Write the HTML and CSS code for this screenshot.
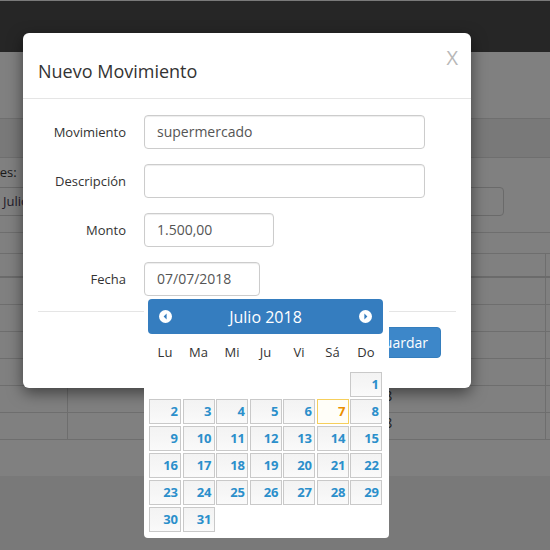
FILE: index.html
```html
<!DOCTYPE html>
<html lang="es">
<head>
<meta charset="utf-8">
<title>Nuevo Movimiento</title>
<link rel="stylesheet" href="styles.css">
</head>
<body>
<div class="page">
  <div class="navbar"></div>
  <main class="main">
    <div class="band"></div>
    <div class="filters">
      <div class="filter-col">
        <div class="bg-label">Mes:</div>
        <div class="bg-input">Julio</div>
      </div>
      <div class="filter-col right">
        <div class="bg-label">&nbsp;</div>
        <div class="bg-input"></div>
      </div>
    </div>
    <div class="bg-table">
      <div class="tr head"><div class="td"></div><div class="td"></div><div class="td"></div><div class="td"></div></div>
      <div class="tr"><div class="td"></div><div class="td"></div><div class="td"></div><div class="td"></div></div>
      <div class="tr"><div class="td"></div><div class="td"></div><div class="td"></div><div class="td"></div></div>
      <div class="tr"><div class="td"></div><div class="td"></div><div class="td"></div><div class="td"></div></div>
      <div class="tr"><div class="td"></div><div class="td"></div><div class="td"></div><div class="td"></div></div>
      <div class="tr"><div class="td"></div><div class="td"></div><div class="td">01/07/2018</div><div class="td"></div></div>
      <div class="tr"><div class="td"></div><div class="td"></div><div class="td">03/07/2018</div><div class="td"></div></div>
    </div>
  </main>
</div>

<div class="modal">
  <div class="modal-header">
    <h4 class="modal-title">Nuevo Movimiento</h4>
    <span class="close">X</span>
  </div>
  <div class="modal-body">
    <div class="form-group">
      <label class="form-label">Movimiento</label>
      <div class="form-control wide">supermercado</div>
    </div>
    <div class="form-group">
      <label class="form-label">Descripción</label>
      <div class="form-control wide"></div>
    </div>
    <div class="form-group">
      <label class="form-label">Monto</label>
      <div class="form-control monto">1.500,00</div>
    </div>
    <div class="form-group last">
      <label class="form-label">Fecha</label>
      <div class="form-control fecha">07/07/2018</div>
    </div>
  </div>
  <div class="modal-footer">
    <button class="btn-primary">Guardar</button>
  </div>
</div>

<div class="datepicker">
  <div class="dp-header">
    <svg class="dp-arrow" viewBox="0 0 13 13" width="13" height="13"><circle cx="6.5" cy="6.5" r="6.5" fill="#fff"/><path d="M7.6 3.6 L4.6 6.5 L7.6 9.4 Z" fill="#357dbf"/></svg>
    <span class="dp-title">Julio 2018</span>
    <svg class="dp-arrow" viewBox="0 0 13 13" width="13" height="13"><circle cx="6.5" cy="6.5" r="6.5" fill="#fff"/><path d="M5.4 3.6 L8.4 6.5 L5.4 9.4 Z" fill="#357dbf"/></svg>
  </div>
  <div class="dp-grid">
    <div class="dp-dow">Lu</div><div class="dp-dow">Ma</div><div class="dp-dow">Mi</div><div class="dp-dow">Ju</div><div class="dp-dow">Vi</div><div class="dp-dow">Sá</div><div class="dp-dow">Do</div>
    <div class="dp-empty"></div><div class="dp-empty"></div><div class="dp-empty"></div><div class="dp-empty"></div><div class="dp-empty"></div><div class="dp-empty"></div><div class="dp-day">1</div>
    <div class="dp-day">2</div><div class="dp-day">3</div><div class="dp-day">4</div><div class="dp-day">5</div><div class="dp-day">6</div><div class="dp-day today">7</div><div class="dp-day">8</div>
    <div class="dp-day">9</div><div class="dp-day">10</div><div class="dp-day">11</div><div class="dp-day">12</div><div class="dp-day">13</div><div class="dp-day">14</div><div class="dp-day">15</div>
    <div class="dp-day">16</div><div class="dp-day">17</div><div class="dp-day">18</div><div class="dp-day">19</div><div class="dp-day">20</div><div class="dp-day">21</div><div class="dp-day">22</div>
    <div class="dp-day">23</div><div class="dp-day">24</div><div class="dp-day">25</div><div class="dp-day">26</div><div class="dp-day">27</div><div class="dp-day">28</div><div class="dp-day">29</div>
    <div class="dp-day">30</div><div class="dp-day">31</div>
  </div>
</div>
</body>
</html>
```

FILE: styles.css
```css
* { box-sizing: border-box; }
html, body { margin: 0; padding: 0; }
body {
  width: 550px;
  height: 550px;
  overflow: hidden;
  background: #797979;
  font-family: "Open Sans", "DejaVu Sans", sans-serif;
  color: #333;
  position: relative;
}
.page { width: 550px; }
.navbar {
  height: 52px;
  background: #262626;
  border-top: 1px solid #7a7a7a;
}
.main {
  height: 424px;
  background: #808080;
  padding-top: 66px;
  overflow: hidden;
}
.band {
  height: 40px;
  background: #797979;
  border-top: 1px solid #6f6f6f;
  border-bottom: 1px solid #6f6f6f;
}
.filters {
  display: flex;
  justify-content: space-between;
  margin-left: -12px;
  padding: 4px 46px 16px 0;
  border-bottom: 1px solid #6e6e6e;
}
.filter-col { width: 200px; }
.filter-col.right { width: 210px; }
.bg-label {
  font-size: 13px;
  line-height: 20px;
  color: #1a1a1a;
  margin-bottom: 5px;
}
.bg-input {
  height: 29px;
  border: 1px solid #6a6a6a;
  border-radius: 4px;
  padding: 0 14px;
  font-size: 13px;
  line-height: 27px;
  color: #221a2a;
}
.bg-table {
  margin-top: 20px;
  border-top: 1px solid #6e6e6e;
}
.tr {
  display: grid;
  grid-template-columns: 68px 242px 236px 1fr;
  height: 27px;
  border-bottom: 1px solid #6e6e6e;
}
.tr.head {
  height: 24px;
  border-bottom: 2px solid #6b6b6b;
}
.td {
  border-right: 1px solid #6e6e6e;
  padding: 0 8px;
  font-size: 14px;
  line-height: 20px;
  color: #1c1c1c;
  white-space: nowrap;
  overflow: hidden;
}
.td:last-child { border-right: none; }

/* Modal */
.modal {
  position: absolute;
  left: 23px;
  top: 33px;
  width: 448px;
  height: 355px;
  background: #fff;
  border-radius: 6px;
  box-shadow: 0 5px 15px rgba(0,0,0,.5);
}
.modal-header {
  padding: 25px 15px 14px;
  border-bottom: 1px solid #e5e5e5;
  position: relative;
}
.modal-title {
  margin: 0;
  font-size: 18px;
  font-weight: 400;
  line-height: 26px;
  color: #333;
}
.close {
  position: absolute;
  right: 13px;
  top: 13px;
  font-size: 20px;
  line-height: 24px;
  color: #b8b8b8;
  font-weight: 400;
}
.modal-body { padding: 16px 15px 0; }
.form-group {
  display: flex;
  align-items: center;
  margin-bottom: 15px;
}
.form-group.last { margin-bottom: 15px; }
.form-label {
  width: 88px;
  text-align: right;
  font-size: 13px;
  color: #333;
  margin-right: 18px;
}
.form-control {
  height: 34px;
  border: 1px solid #ccc;
  border-radius: 4px;
  box-shadow: inset 0 1px 1px rgba(0,0,0,.075);
  padding: 0 12px;
  font-size: 14px;
  line-height: 32px;
  color: #555;
}
.form-control.wide { width: 281px; }
.form-control.monto { width: 130px; }
.form-control.fecha { width: 116px; }
.modal-footer {
  margin: 0 15px;
  border-top: 1px solid #e5e5e5;
  padding: 15px 15px 30px;
  display: flex;
  justify-content: flex-end;
}
.btn-primary {
  height: 31px;
  padding: 0 12px;
  border: 1px solid #357ebd;
  border-radius: 4px;
  background: #3d87c9;
  color: #fff;
  font-family: "Open Sans", sans-serif;
  font-size: 14px;
  line-height: 29px;
}

/* Datepicker */
.datepicker {
  position: absolute;
  left: 144px;
  top: 296px;
  width: 245px;
  height: 242px;
  background: #fff;
  border-radius: 0 0 4px 4px;
  padding: 3px 6px 0 4px;
}
.dp-header {
  height: 35px;
  background: #357dbf;
  border-radius: 4px;
  display: flex;
  align-items: center;
  justify-content: space-between;
  padding: 0 11px;
}
.dp-arrow { display: block; }
.dp-title {
  color: #fff;
  font-size: 16px;
  line-height: 20px;
}
.dp-grid {
  margin-left: 1px;
  display: grid;
  grid-template-columns: repeat(7, 32px);
  grid-template-rows: 36px repeat(6, 25px);
  column-gap: 1.5px;
  row-gap: 2px;
}
.dp-dow {
  text-align: center;
  font-size: 13px;
  line-height: 36px;
  color: #333;
}
.dp-day {
  border: 1px solid #c9c9c9;
  background: linear-gradient(to bottom, #f3f3f3 0%, #f6f6f6 50%, #fafafa 100%);
  text-align: right;
  padding-right: 2px;
  font-size: 13px;
  font-weight: 700;
  line-height: 23px;
  color: #2b8fcb;
}
.dp-day.today {
  border-color: #f6cf5c;
  background: #fffef8;
  color: #eb8f00;
}
```
